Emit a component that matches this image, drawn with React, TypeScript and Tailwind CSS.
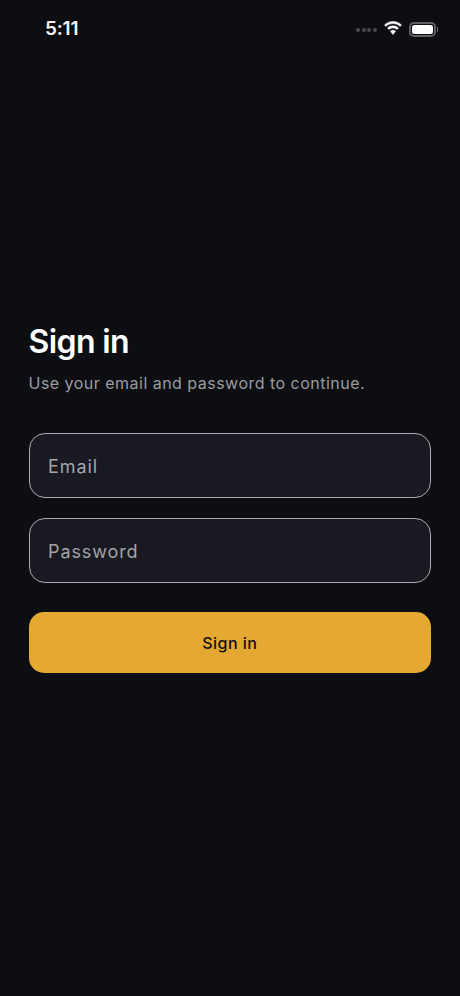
function StatusBar() {
  return (
    <div className="flex h-[58px] items-center justify-between pl-[45px] pr-[22px]">
      <span className="text-[19px] font-semibold tracking-[-0.2px] text-[#f4f4f5]">5:11</span>
      <div className="flex items-center">
        <div className="mr-[6px] mt-[2px] flex gap-[1.5px]">
          <span className="h-[4px] w-[4px] rounded-full bg-[#4a4b4f]" />
          <span className="h-[4px] w-[4px] rounded-full bg-[#4a4b4f]" />
          <span className="h-[4px] w-[4px] rounded-full bg-[#4a4b4f]" />
          <span className="h-[4px] w-[4px] rounded-full bg-[#4a4b4f]" />
        </div>
        <svg width="20" height="15" viewBox="0 0 20 15" fill="white" stroke="white" strokeWidth="0.5" className="mb-[1px] mr-[6px]">
          <path d="M10 2.6c2.7 0 5.2 1 7.1 2.800l1.400-1.500C16.200 1.700 13.200.4 10 .4S3.800 1.700 1.500 3.900l1.400 1.500C4.800 3.600 7.300 2.600 10 2.600z" />
          <path d="M10 6.900c1.500 0 2.900.6 4 1.600l1.500-1.500C14 5.600 12.100 4.800 10 4.800s-4 .8-5.500 2.200L6 8.500c1.100-1 2.500-1.600 4-1.600z" />
          <path d="M10 9.200c-1 0-1.900.4-2.600 1L10 13.600l2.600-3.400c-.7-.6-1.600-1-2.600-1z" />
        </svg>
        <div className="flex items-center">
          <div className="h-[15px] w-[27px] rounded-[5px] border-2 border-[#5f6064] p-[1px]">
            <div className="h-full w-full rounded-[2.5px] bg-white" />
          </div>
          <span className="ml-[1px] h-[5px] w-[1.5px] rounded-r-full bg-[#6f7074]" />
        </div>
      </div>
    </div>
  );
}

function Field({ placeholder, type }: { placeholder: string; type: string }) {
  return (
    <input
      type={type}
      placeholder={placeholder}
      className="h-[65.5px] w-full rounded-[16px] border border-[#a9aaae] bg-[#181921] px-[18.5px] pt-[2px] text-[18px] tracking-[0.9px] text-white outline-none placeholder:text-[#a3a4a8]"
    />
  );
}

export default function App() {
  return (
    <div className="flex min-h-[996px] flex-col bg-[#0c0e12] font-['Inter',sans-serif]">
      <StatusBar />
      <main className="pl-[28.5px] pr-[29px] pt-[264px]">
        <h1 className="text-[32px] font-semibold leading-[39px] tracking-[-0.6px] text-white">Sign in</h1>
        <p className="mt-[12px] text-[16px] leading-[20px] tracking-[0.48px] text-[#9b9ca1]">
          Use your email and password to continue.
        </p>
        <form className="mt-[39.5px] flex flex-col gap-[19.5px]">
          <Field type="email" placeholder="Email" />
          <Field type="password" placeholder="Password" />
          <button
            type="button"
            className="mt-[9px] h-[61px] w-full rounded-[15px] bg-[#e5a832] pt-[1px] text-[16px] font-medium tracking-[0.45px] text-[#0f1014]"
          >
            Sign in
          </button>
        </form>
      </main>
    </div>
  );
}
